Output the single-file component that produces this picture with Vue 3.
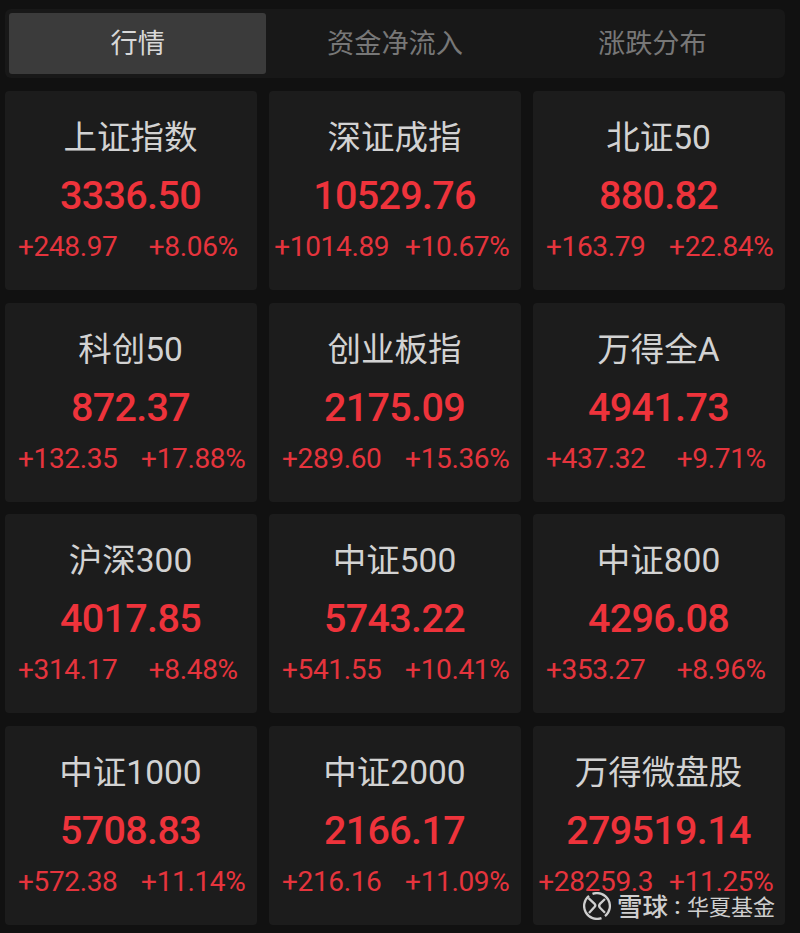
<script setup>
import { ref } from 'vue'

const tabs = ['行情', '资金净流入', '涨跌分布']
const activeTab = ref(0)

const indexes = [
  { name: '上证指数', price: '3336.50', change: '+248.97', percent: '+8.06%' },
  { name: '深证成指', price: '10529.76', change: '+1014.89', percent: '+10.67%' },
  { name: '北证50', price: '880.82', change: '+163.79', percent: '+22.84%' },
  { name: '科创50', price: '872.37', change: '+132.35', percent: '+17.88%' },
  { name: '创业板指', price: '2175.09', change: '+289.60', percent: '+15.36%' },
  { name: '万得全A', price: '4941.73', change: '+437.32', percent: '+9.71%' },
  { name: '沪深300', price: '4017.85', change: '+314.17', percent: '+8.48%' },
  { name: '中证500', price: '5743.22', change: '+541.55', percent: '+10.41%' },
  { name: '中证800', price: '4296.08', change: '+353.27', percent: '+8.96%' },
  { name: '中证1000', price: '5708.83', change: '+572.38', percent: '+11.14%' },
  { name: '中证2000', price: '2166.17', change: '+216.16', percent: '+11.09%' },
  { name: '万得微盘股', price: '279519.14', change: '+28259.3', percent: '+11.25%' },
]
</script>

<template>
  <main class="market">
    <nav class="tabs">
      <button
        v-for="(tab, i) in tabs"
        :key="tab"
        type="button"
        class="tab"
        :class="{ active: i === activeTab }"
        @click="activeTab = i"
      >
        {{ tab }}
      </button>
    </nav>

    <section class="grid">
      <article v-for="item in indexes" :key="item.name" class="card">
        <h2>{{ item.name }}</h2>
        <div class="price">{{ item.price }}</div>
        <div class="delta">
          <span>{{ item.change }}</span>
          <span>{{ item.percent }}</span>
        </div>
      </article>
    </section>

    <div class="watermark">
      <svg width="28" height="28" viewBox="0 0 28 28" fill="none" stroke="currentColor">
        <path d="M9.5 1.9A12.9 12.9 0 0 1 22 24.1" stroke-width="2.3" />
        <path d="M18.5 26.1A12.9 12.9 0 0 1 6 3.9" stroke-width="2.3" />
        <path d="M5.5 6.2L11.6 11.8Q13 13.3 11.7 14.8L6 21" stroke-width="2.3" />
        <path d="M22 7L17.2 11.6Q15.2 14 17 15.8L22 20.8" stroke-width="2.3" />
      </svg>
      <span class="brand">雪球</span>
      <span class="colon">:</span>
      <span class="author">华夏基金</span>
    </div>
  </main>
</template>

<style>
body {
  margin: 0;
  background: #111;
}
</style>

<style scoped>
.market {
  position: relative;
  box-sizing: border-box;
  width: 800px;
  height: 933px;
  padding: 9px 15px 0 5px;
  overflow: hidden;
  background: #111;
  font-family: Roboto, 'Noto Sans CJK SC', sans-serif;
}

.tabs {
  display: grid;
  grid-template-columns: repeat(3, 1fr);
  box-sizing: border-box;
  height: 69px;
  padding: 4px;
  border-radius: 6px;
  background: #181818;
}

.tab {
  padding: 2px 0 0;
  border: 0;
  border-radius: 3px;
  background: none;
  color: #777;
  font: inherit;
  font-size: 27.2px;
  line-height: 59px;
  cursor: pointer;
}

.tab.active {
  background: #3b3b3b;
  color: #d8d8d8;
}

.grid {
  display: grid;
  grid-template-columns: repeat(3, 252px);
  grid-auto-rows: 199.3px;
  gap: 12.3px 12px;
  margin-top: 13px;
}

.card {
  box-sizing: border-box;
  padding-right: 1px;
  border-radius: 4px;
  background: #1c1c1c;
  text-align: center;
  white-space: nowrap;
}

h2 {
  margin: 22px 0 0;
  color: #d2d2d2;
  font-size: 33.5px;
  font-weight: 400;
  line-height: 50px;
}

.price {
  margin-top: 8px;
  color: #ee333b;
  font-size: 39.5px;
  font-weight: 500;
  letter-spacing: -0.7px;
  line-height: 50px;
}

.delta {
  display: grid;
  grid-template-columns: 1fr 1fr;
  margin-top: 8px;
  color: #e5343d;
  font-size: 28px;
  letter-spacing: -0.35px;
  line-height: 36px;
}

.delta span {
  display: flex;
  justify-content: center;
}

.watermark {
  position: absolute;
  right: 25px;
  bottom: 9px;
  display: flex;
  align-items: center;
  height: 36px;
  color: #cfcfcf;
  line-height: 36px;
}

.brand {
  margin-left: 6px;
  padding-top: 2px;
  font-size: 25.5px;
  font-weight: 500;
}

.colon {
  width: 19px;
  font-size: 24px;
  font-weight: 500;
  text-align: center;
}

.author {
  padding-top: 3px;
  font-size: 22px;
}
</style>
